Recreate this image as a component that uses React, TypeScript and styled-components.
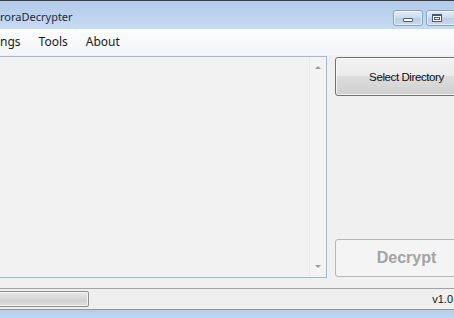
import React from "react";
import styled, { createGlobalStyle } from "styled-components";

const Global = createGlobalStyle`
  html, body { margin: 0; padding: 0; background: #f0f0f0; overflow: hidden; }
  * { box-sizing: border-box; }
`;

const Window = styled.div`
  width: 454px;
  height: 318px;
  display: flex;
  flex-direction: column;
  overflow: hidden;
  background: #f0f0f0;
  font-family: "Noto Sans", "DejaVu Sans", sans-serif;
`;

const TitleBar = styled.div`
  height: 29px;
  flex: none;
  display: flex;
  align-items: flex-start;
  border-top: 1px solid #3a3d42;
  background: linear-gradient(180deg, #b2cbea 0%, #bdd3ee 55%, #c8dbf2 100%);
`;

const Title = styled.div`
  padding-top: 8px;
  font-size: 11px;
  color: #1e2a3a;
  white-space: nowrap;
`;

const Captions = styled.div`
  margin-left: auto;
  display: flex;
  gap: 3px;
  padding-top: 9px;
  margin-right: -6px;
`;

const CapButton = styled.div<{ $w: number }>`
  width: ${(p) => p.$w}px;
  height: 16px;
  border: 1px solid #8aa3c2;
  border-radius: 3px;
  background: linear-gradient(180deg, #e3ecf7 0%, #cbdbee 50%, #b9cde6 51%, #c9daee 100%);
  box-shadow: inset 0 0 0 1px rgba(255, 255, 255, 0.55);
  display: flex;
  align-items: center;
  justify-content: center;
`;

const MinGlyph = styled.div`
  width: 10px;
  height: 4px;
  margin-top: 4px;
  background: #fff;
  border: 1px solid #4a5a70;
  border-radius: 1px;
`;

const MaxGlyph = styled.div`
  width: 10px;
  height: 8px;
  background: #fff;
  border: 1px solid #4a5a70;
  border-top-width: 2px;
  margin-left: -12px;
  box-shadow: inset 0 0 0 1px #fff, inset 0 0 0 2px #4a5a70;
`;

const MenuBar = styled.div`
  height: 27px;
  flex: none;
  display: flex;
  align-items: center;
  padding-bottom: 1px;
  background: linear-gradient(180deg, #fbfcfd 0%, #f3f5f8 100%);
  border-bottom: 1px solid #f0f0f0;
`;

const MenuItem = styled.div`
  font-size: 12px;
  color: #1a1a1a;
  padding: 0 9px;
  &:first-child { padding-left: 0; }
`;

const Main = styled.div`
  height: 232px;
  flex: none;
  display: flex;
  align-items: flex-start;
  gap: 8px;
`;

const ListBox = styled.div`
  width: 327px;
  height: 222px;
  flex: none;
  display: flex;
  border: 1px solid #a9b8c9;
  border-left: none;
  background: #f2f2f2;
`;

const ListBody = styled.div`
  flex: 1;
`;

const ScrollBar = styled.div`
  width: 17px;
  display: flex;
  flex-direction: column;
  justify-content: space-between;
  align-items: center;
  padding: 9px 0 9px;
  border-left: 1px solid #e6e8ea;
  background: #f3f3f3;
`;

const Arrow = styled.div<{ $down?: boolean }>`
  width: 0;
  height: 0;
  border-left: 3.5px solid transparent;
  border-right: 3.5px solid transparent;
  ${(p) =>
    p.$down
      ? "border-top: 3px solid #9a9a9a;"
      : "border-bottom: 3px solid #9a9a9a;"}
`;

const ButtonColumn = styled.div`
  width: 143px;
  height: 222px;
  flex: none;
  display: flex;
  flex-direction: column;
  justify-content: space-between;
  padding: 1px 0;
`;

const Button = styled.div<{ $disabled?: boolean; $h: number }>`
  height: ${(p) => p.$h}px;
  display: flex;
  align-items: center;
  justify-content: center;
  border-radius: 3px;
  font-family: "Liberation Sans", Arial, sans-serif;
  ${(p) =>
    p.$disabled
      ? `
    border: 1px solid #b5b8bb;
    background: #f4f4f4;
    color: #a3a3a3;
    font-size: 16px;
    font-weight: bold;
  `
      : `
    border: 1px solid #707070;
    background: linear-gradient(180deg, #f2f2f2 0%, #ebebeb 49%, #dddddd 50%, #cfcfcf 100%);
    box-shadow: inset 0 0 0 1px rgba(255,255,255,0.7);
    color: #111;
    font-size: 11.5px;
    letter-spacing: -0.4px;
  `}
`;

const StatusBar = styled.div`
  height: 21px;
  flex: none;
  display: flex;
  align-items: center;
  border-top: 1px solid #a3a3a3;
  background: #f0efef;
  padding: 0 0 1px 0;
`;

const Progress = styled.div`
  width: 91px;
  height: 16px;
  margin-left: -2px;
  border: 1px solid #8f8f8f;
  border-radius: 2px;
  background: linear-gradient(180deg, #e8e8e8 0%, #dadada 40%, #d2d2d2 60%, #dedede 100%);
  box-shadow: inset 0 0 0 1px #f4f4f4;
`;

const Version = styled.div`
  margin-left: auto;
  margin-right: 1px;
  font-family: "Liberation Sans", Arial, sans-serif;
  font-size: 11px;
  color: #111;
`;

const Frame = styled.div`
  flex: 1;
  border-top: 1px solid #6f9fc9;
  background: linear-gradient(180deg, #b3cfed 0%, #bcd5ef 100%);
`;

export default function App() {
  return (
    <Window>
      <Global />
      <TitleBar>
        <Title>roraDecrypter</Title>
        <Captions>
          <CapButton $w={30}>
            <MinGlyph />
          </CapButton>
          <CapButton $w={34}>
            <MaxGlyph />
          </CapButton>
        </Captions>
      </TitleBar>
      <MenuBar>
        <MenuItem>ngs</MenuItem>
        <MenuItem>Tools</MenuItem>
        <MenuItem>About</MenuItem>
      </MenuBar>
      <Main>
        <ListBox>
          <ListBody />
          <ScrollBar>
            <Arrow />
            <Arrow $down />
          </ScrollBar>
        </ListBox>
        <ButtonColumn>
          <Button $h={39}>Select Directory</Button>
          <Button $h={38} $disabled>
            Decrypt
          </Button>
        </ButtonColumn>
      </Main>
      <StatusBar>
        <Progress />
        <Version>v1.0</Version>
      </StatusBar>
      <Frame />
    </Window>
  );
}
